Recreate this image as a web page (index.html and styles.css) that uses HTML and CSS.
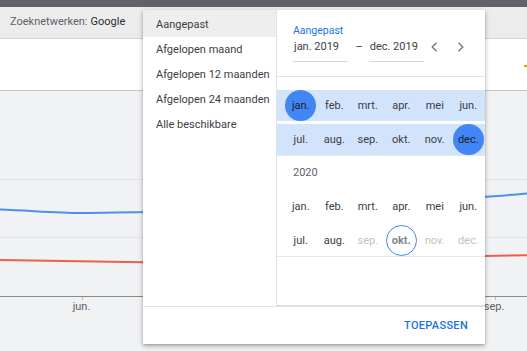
FILE: index.html
```html
<!DOCTYPE html>
<html lang="nl">
<head>
<meta charset="utf-8">
<title>Datumbereik</title>
<link rel="stylesheet" href="styles.css">
</head>
<body>
<div class="page">
  <div class="topbar"></div>
  <div class="filterbar">
    <span class="filter-label">Zoeknetwerken:</span>
    <span class="filter-value">Google</span>
  </div>
  <div class="summary"><span class="legend-mark"></span></div>
  <div class="chart">
    <svg class="chart-svg" width="527" height="260" viewBox="0 0 527 260">
      <line x1="0" y1="88.5" x2="527" y2="88.5" class="grid"/>
      <line x1="0" y1="146.5" x2="527" y2="146.5" class="grid"/>
      <path class="line-blue" d="M0,118.5 C30,119.5 55,122 82,122 C105,122 125,121 150,121 L480,106 C500,105 515,103.5 527,102.5"/>
      <path class="line-red" d="M0,169 C50,170 100,171 143,171.3 L485,165 C500,164.7 515,164.4 527,164.3"/>
      <line x1="0" y1="205.5" x2="527" y2="205.5" class="axis"/>
      <line x1="82.5" y1="206" x2="82.5" y2="209" class="tick"/>
      <line x1="495.5" y1="206" x2="495.5" y2="209" class="tick"/>
      <text x="81.5" y="219" class="axis-label">jun.</text>
      <text x="494" y="219" class="axis-label">sep.</text>
    </svg>
  </div>
</div>

<div class="picker">
  <div class="picker-body">
    <ul class="presets">
      <li class="preset active">Aangepast</li>
      <li class="preset">Afgelopen maand</li>
      <li class="preset">Afgelopen 12 maanden</li>
      <li class="preset">Afgelopen 24 maanden</li>
      <li class="preset">Alle beschikbare</li>
    </ul>
    <div class="custom">
      <div class="custom-head">
        <div class="custom-title">Aangepast</div>
        <div class="range">
          <div class="field">jan. 2019</div>
          <span class="dash">–</span>
          <div class="field">dec. 2019</div>
          <button class="nav nav-prev" aria-label="Vorige">
            <svg width="8" height="10" viewBox="0 0 8 10"><path d="M6.5 0.8 L2.2 5 L6.5 9.2" fill="none" stroke="#6f7378" stroke-width="1.3"/></svg>
          </button>
          <button class="nav nav-next" aria-label="Volgende">
            <svg width="8" height="10" viewBox="0 0 8 10"><path d="M1.5 0.8 L5.8 5 L1.5 9.2" fill="none" stroke="#6f7378" stroke-width="1.3"/></svg>
          </button>
        </div>
      </div>
      <div class="calendar">
        <div class="year year-partial">
          <div class="month-rows">
            <div class="month-row in-range">
              <span class="month"><span class="month-dot selected">jan.</span></span>
              <span class="month"><span class="month-dot">feb.</span></span>
              <span class="month"><span class="month-dot">mrt.</span></span>
              <span class="month"><span class="month-dot">apr.</span></span>
              <span class="month"><span class="month-dot">mei</span></span>
              <span class="month"><span class="month-dot">jun.</span></span>
            </div>
            <div class="month-row in-range">
              <span class="month"><span class="month-dot">jul.</span></span>
              <span class="month"><span class="month-dot">aug.</span></span>
              <span class="month"><span class="month-dot">sep.</span></span>
              <span class="month"><span class="month-dot">okt.</span></span>
              <span class="month"><span class="month-dot">nov.</span></span>
              <span class="month"><span class="month-dot selected">dec.</span></span>
            </div>
          </div>
        </div>
        <div class="year">
          <div class="year-label">2020</div>
          <div class="month-rows">
            <div class="month-row">
              <span class="month"><span class="month-dot">jan.</span></span>
              <span class="month"><span class="month-dot">feb.</span></span>
              <span class="month"><span class="month-dot">mrt.</span></span>
              <span class="month"><span class="month-dot">apr.</span></span>
              <span class="month"><span class="month-dot">mei</span></span>
              <span class="month"><span class="month-dot">jun.</span></span>
            </div>
            <div class="month-row">
              <span class="month"><span class="month-dot">jul.</span></span>
              <span class="month"><span class="month-dot">aug.</span></span>
              <span class="month"><span class="month-dot disabled">sep.</span></span>
              <span class="month"><span class="month-dot current">okt.</span></span>
              <span class="month"><span class="month-dot disabled">nov.</span></span>
              <span class="month"><span class="month-dot disabled">dec.</span></span>
            </div>
          </div>
        </div>
      </div>
    </div>
  </div>
  <div class="picker-foot">
    <button class="apply">TOEPASSEN</button>
  </div>
</div>
</body>
</html>
```

FILE: styles.css
```css
* { box-sizing: border-box; }

html, body {
  margin: 0;
  padding: 0;
}

body {
  width: 527px;
  height: 351px;
  overflow: hidden;
  position: relative;
  font-family: Roboto, "Noto Sans", "Liberation Sans", sans-serif;
  font-size: 11px;
  color: #3c4043;
  background: #f1f2f4;
}

.page {
  display: flex;
  flex-direction: column;
  height: 351px;
}

.topbar {
  height: 7px;
  background: #5f6266;
  flex: none;
}

.filterbar {
  height: 32px;
  flex: none;
  display: flex;
  align-items: center;
  gap: 3px;
  padding: 0 10px 2px;
  background: #ececec;
  border-bottom: 1px solid #d4d4d4;
}

.filter-label { color: #5f6368; }
.filter-value { color: #2b2f33; }

.summary {
  height: 52px;
  flex: none;
  background: #ffffff;
  border-bottom: 1px solid #c6c6c6;
  display: flex;
  justify-content: flex-end;
  align-items: flex-start;
  padding-top: 26px;
}

.legend-mark {
  width: 3px;
  height: 2px;
  background: #f29900;
}

.chart {
  flex: 1;
  background: #f1f2f4;
}

.chart-svg { display: block; }

.grid { stroke: #e3e4e7; stroke-width: 1; }
.axis { stroke: #8a8a8a; stroke-width: 1; }
.tick { stroke: #b8b8b8; stroke-width: 1; }
.line-blue { fill: none; stroke: #4a8ff2; stroke-width: 2; }
.line-red { fill: none; stroke: #ee5d4e; stroke-width: 2; }

.axis-label {
  font-family: Roboto, "Noto Sans", sans-serif;
  font-size: 11px;
  fill: #5f6368;
  text-anchor: middle;
}

/* Picker overlay */
.picker {
  position: absolute;
  left: 143px;
  top: 10px;
  width: 342px;
  height: 334px;
  background: #ffffff;
  box-shadow: 0 2px 5px rgba(0, 0, 0, 0.28), 0 1px 2px rgba(0, 0, 0, 0.15);
  display: flex;
  flex-direction: column;
}

.picker-body {
  height: 296px;
  flex: none;
  display: flex;
}

.presets {
  list-style: none;
  margin: 0;
  padding: 0;
  width: 134px;
  flex: none;
  border-right: 1px solid #e3e3e3;
}

.preset {
  height: 25px;
  line-height: 25px;
  padding-left: 13px;
  color: #3c4043;
  white-space: nowrap;
}

.preset.active {
  height: 27px;
  padding-top: 2px;
  background: #eeeeee;
}

.custom {
  flex: 1;
  display: flex;
  flex-direction: column;
  min-width: 0;
}

.custom-head {
  flex: none;
  height: 67px;
  padding: 14px 16px 0;
  border-bottom: 1px solid #e3e3e3;
}

.custom-title {
  font-size: 10.5px;
  line-height: 14px;
  color: #1a73e8;
}

.range {
  margin-top: 2px;
  display: flex;
  align-items: flex-start;
}

.field {
  width: 57px;
  line-height: 14px;
  padding-bottom: 7px;
  border-bottom: 1px solid #d6d6d6;
  color: #3c4043;
  white-space: nowrap;
  padding-left: 1px;
}

.dash {
  width: 21px;
  text-align: center;
  line-height: 13px;
  color: #3c4043;
  padding-left: 1px;
}

.nav {
  width: 16px;
  height: 14px;
  padding: 0;
  border: 0;
  background: none;
  display: flex;
  align-items: center;
  justify-content: center;
}

.nav-prev { margin-left: 2px; }
.nav-next { margin-left: 12px; }

.calendar {
  flex: 1;
  overflow: hidden;
  border-bottom: 1px solid #dcdcdc;
}

.year {
  border-bottom: 1px solid #e8e8e8;
}

.year-partial {
  padding-top: 13px;
}

.year-label {
  padding: 10px 0 11px 16px;
  line-height: 14px;
  color: #5f6368;
}

.month-rows {
  display: flex;
  flex-direction: column;
  gap: 3px;
}

.month-row {
  height: 31px;
  padding-left: 7px;
  display: grid;
  grid-template-columns: repeat(6, 1fr);
}

.month-row.in-range {
  background: #d2e3fc;
}

.month {
  display: flex;
  align-items: center;
  justify-content: center;
}

.month-dot {
  width: 31px;
  height: 31px;
  border-radius: 50%;
  display: flex;
  align-items: center;
  justify-content: center;
  color: #3c4043;
}

.month-dot.selected {
  background: #4285f4;
  color: #202124;
}

.month-dot.disabled {
  color: #bdc1c6;
}

.month-dot.current {
  border: 1px solid #4285f4;
  color: #80868b;
  font-weight: 700;
}

.picker-foot {
  flex: 1;
  border-top: 1px solid #e3e3e3;
  display: flex;
  align-items: center;
  justify-content: flex-end;
  padding-right: 17px;
}

.apply {
  border: 0;
  background: none;
  padding: 0;
  font-family: Roboto, "Noto Sans", sans-serif;
  font-size: 11px;
  font-weight: 500;
  letter-spacing: 0.3px;
  color: #1a73e8;
}
```
